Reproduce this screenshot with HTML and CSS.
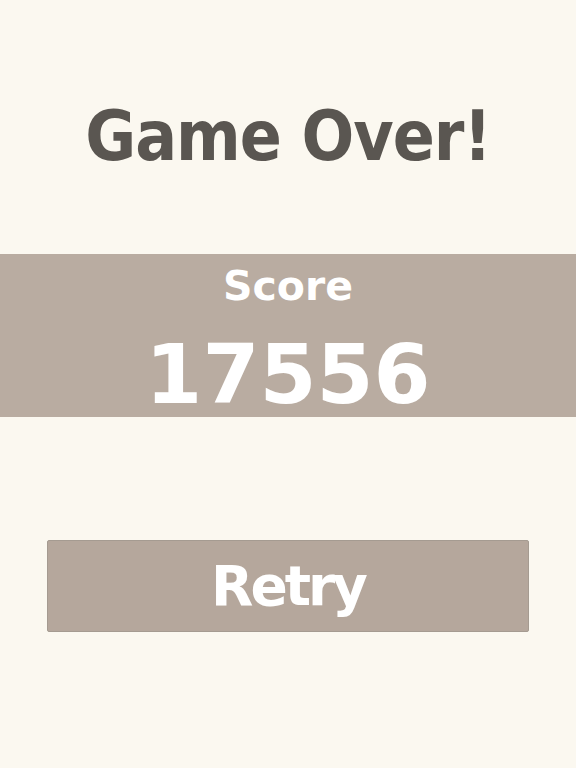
FILE: index.html
```html
<!DOCTYPE html>
<html>
<head>
  <meta charset="utf-8">
  <link rel="stylesheet" href="styles.css">
</head>
<body>
  <div class="screen">
    <h1 class="title">Game Over!</h1>

    <div class="score-band">
      <div class="score-label">Score</div>
      <div class="score-value">17556</div>
    </div>

    <button class="retry-button">Retry</button>
  </div>
</body>
</html>
```

FILE: styles.css
```css
body {
  margin: 0;
  padding: 0;
  background-color: #fbf8f0;
  font-family: "DejaVu Sans", Verdana, sans-serif;
}

.screen {
  display: flex;
  flex-direction: column;
  align-items: center;
  height: 768px;
}

.title {
  margin: 0;
  padding-top: 102px;
  height: 254px;
  box-sizing: border-box;
  font-size: 69px;
  line-height: 1;
  font-weight: bold;
  font-stretch: condensed;
  color: #5a5651;
  letter-spacing: -1px;
}

.score-band {
  width: 100%;
  height: 163px;
  box-sizing: border-box;
  background-color: #b9aca1;
  color: #fff;
  text-align: center;
  padding-top: 7px;
}

.score-label {
  font-size: 41px;
  line-height: 50px;
  font-weight: bold;
}

.score-value {
  font-size: 82px;
  line-height: 90px;
  font-weight: bold;
  margin-top: 19px;
}

.retry-button {
  margin-top: 123px;
  width: 482px;
  height: 92px;
  background-color: #b5a79c;
  border: 1px solid #a59b91;
  border-radius: 2px;
  color: #fff;
  font-family: inherit;
  font-size: 55px;
  font-weight: bold;
  letter-spacing: -3px;
  padding: 0;
  cursor: pointer;
}
```
